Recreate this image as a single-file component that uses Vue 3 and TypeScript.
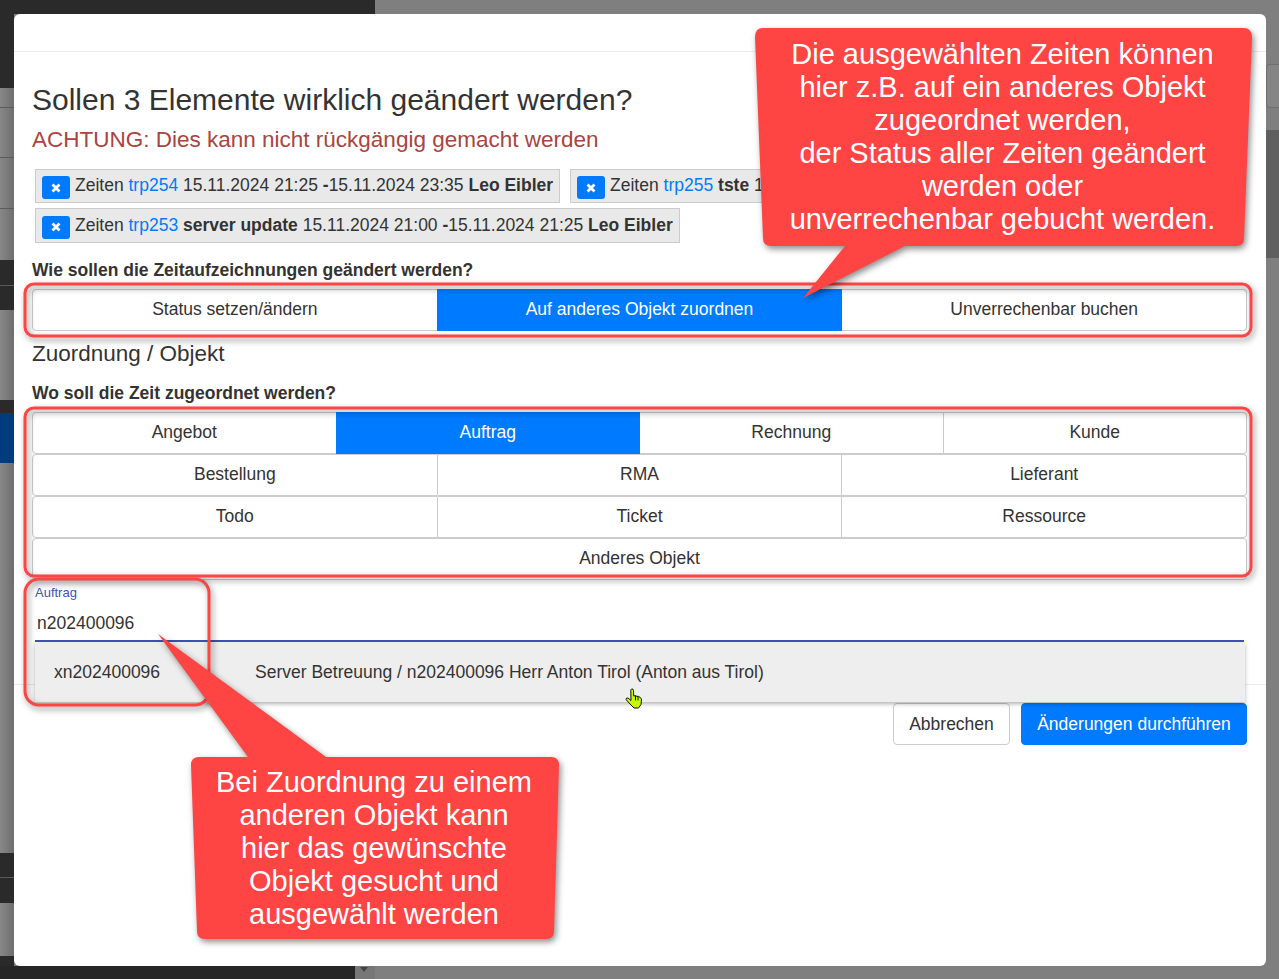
<script setup lang="ts">
interface Chip { id: string; label?: string; from: string; to: string }
const modes = ['Status setzen/ändern', 'Auf anderes Objekt zuordnen', 'Unverrechenbar buchen']
const rows: string[][] = [
  ['Angebot', 'Auftrag', 'Rechnung', 'Kunde'],
  ['Bestellung', 'RMA', 'Lieferant'],
  ['Todo', 'Ticket', 'Ressource'],
  ['Anderes Objekt'],
]
const chips: Chip[] = [
  { id: 'trp254', from: '15.11.2024 21:25', to: '15.11.2024 23:35' },
  { id: 'trp255', label: 'tste', from: '15.11.2024 21:25', to: '15.11.2024 23:35' },
  { id: 'trp253', label: 'server update', from: '15.11.2024 21:00', to: '15.11.2024 21:25' },
]
const rails = [
  ['d', 88], ['g', 19], ['l', 1], ['g', 49], ['l', 1], ['g', 50], ['l', 1], ['g', 51],
  ['d', 25], ['l', 1], ['d', 24], ['g', 90], ['d', 13], ['b', 50], ['g', 390],
  ['d', 24], ['l', 1], ['d', 25], ['g', 53], ['d', 23],
] as const
</script>

<template>
  <div class="stage">
    <div class="top-strip"></div>
    <div class="rail">
      <div v-for="(r, i) in rails" :key="i" :class="['rail-part', r[0]]" :style="{ height: r[1] + 'px' }"></div>
    </div>
    <div class="bottom-strip">
      <div class="bottom-dark"></div>
      <div class="bottom-arrow"></div>
    </div>
    <div class="scroll">
      <div class="scroll-btn"></div>
      <div class="scroll-arrow"></div>
      <div class="scroll-thumb"></div>
    </div>

    <section class="modal">
      <header class="modal-head"></header>
      <div class="modal-body">
        <h3 class="title">Sollen 3 Elemente wirklich geändert werden?</h3>
        <h4 class="warn">ACHTUNG: Dies kann nicht rückgängig gemacht werden</h4>
        <div class="chips">
          <div v-for="c in chips" :key="c.id" class="chip">
            <span class="chip-x">
              <svg width="10" height="10" viewBox="0 0 10 10"><path d="M1.5 1.5 L8.5 8.5 M8.5 1.5 L1.5 8.5" stroke="#fff" stroke-width="2.8" /></svg>
            </span>
            <span class="chip-text">Zeiten <a class="link">{{ c.id }}</a>{{ ' ' }}<template v-if="c.label"><b>{{ c.label }}</b>{{ ' ' }}</template>{{ c.from }} <b>-</b>{{ c.to }} <b>Leo Eibler</b></span>
          </div>
        </div>
        <p class="question q1">Wie sollen die Zeitaufzeichnungen geändert werden?</p>
        <div class="btn-row">
          <button v-for="m in modes" :key="m" :class="['opt', { on: m === modes[1] }]">{{ m }}</button>
        </div>
        <h5 class="sub">Zuordnung / Objekt</h5>
        <p class="question q2">Wo soll die Zeit zugeordnet werden?</p>
        <div class="btn-stack">
          <div v-for="(r, i) in rows" :key="i" class="btn-row">
            <button v-for="b in r" :key="b" :class="['opt', { on: b === 'Auftrag' }]">{{ b }}</button>
          </div>
        </div>
        <div class="field">
          <label class="field-label">Auftrag</label>
          <div class="field-value">n202400096</div>
          <div class="dropdown">
            <span class="dd-code">xn202400096</span>
            <span class="dd-text">Server Betreuung / n202400096 Herr Anton Tirol (Anton aus Tirol)</span>
          </div>
        </div>
      </div>
      <footer class="modal-foot">
        <button class="act cancel">Abbrechen</button>
        <button class="act go">Änderungen durchführen</button>
      </footer>
    </section>

    <svg class="marks" width="1279" height="979" viewBox="0 0 1279 979">
      <g class="shadowed" fill="none" stroke="#ff4444" stroke-width="3">
        <rect x="25" y="284" width="1226" height="52" rx="9" />
        <rect x="25" y="408" width="1226" height="168" rx="9" />
        <rect x="25" y="579" width="184" height="126" rx="14" />
      </g>
      <g class="shadowed" fill="#ff4444">
        <path d="M763 28 H1243 Q1252 28 1252 37 L1244 238 Q1244 246 1236 246 H905 L803 298 L845 246 H771 Q763 246 763 238 L755 37 Q755 28 763 28 Z" />
        <path d="M199 757 H248 L158 634 L326 757 H551 Q559 757 559 765 L554 931 Q554 939 546 939 H205 Q197 939 197 931 L191 765 Q191 757 199 757 Z" />
      </g>
    </svg>
    <div class="note note-a">
      Die ausgewählten Zeiten können<br>hier z.B. auf ein anderes Objekt<br>zugeordnet werden,<br>der Status aller Zeiten geändert<br>werden oder<br>unverrechenbar gebucht werden.
    </div>
    <div class="note note-b">
      Bei Zuordnung zu einem<br>anderen Objekt kann<br>hier das gewünschte<br>Objekt gesucht und<br>ausgewählt werden
    </div>
    <svg class="cursor" width="18" height="21" viewBox="0 0 18 21">
      <path d="M6.5 1 Q8.5 0.5 8.5 2.5 L8.7 8 L10.5 7.6 L12 8.4 L13.5 8.4 L15.5 9.6 Q16.5 10.5 16.5 12 L16 16.5 L13.5 20 H9 L5 16 L1 11.5 Q1 9.6 3 10 L6 12.5 L5.8 2.5 Q5.8 1.4 6.5 1 Z" fill="#c8f800" stroke="#111" stroke-width="1" />
      <path d="M10.5 8 V12.5 M13 8.5 V12.5" stroke="#111" stroke-width="1" fill="none" />
    </svg>
  </div>
</template>

<style scoped>
.stage {
  position: relative;
  width: 1279px;
  height: 979px;
  overflow: hidden;
  background: #7f7f7f;
  font-family: "Liberation Sans", Arial, sans-serif;
  color: #333;
}
.top-strip { position: absolute; left: 0; top: 0; width: 375px; height: 14px; background: #2a2a2a; }
.rail { position: absolute; left: 0; top: 0; width: 14px; }
.rail-part.d { background: #2a2a2a; }
.rail-part.g { background: linear-gradient(90deg, #888, #6e6e6e); }
.rail-part.l { background: #5a5a5a; }
.rail-part.b { background: #003b7f; }
.bottom-strip { position: absolute; left: 0; bottom: 0; width: 375px; height: 13px; display: flex; background: #777; }
.bottom-dark { width: 355px; background: #262626; }
.bottom-arrow {
  margin: 1px 0 0 5px;
  width: 0;
  height: 0;
  border-left: 4px solid transparent;
  border-right: 4px solid transparent;
  border-top: 5px solid #444;
}
.scroll { position: absolute; right: 0; top: 0; width: 13px; height: 979px; display: flex; flex-direction: column; }
.scroll-btn { margin-top: 64px; height: 42px; background: #858585; border: 1px solid #6e6e6e; border-right: 0; border-radius: 4px 0 0 4px; }
.scroll-arrow { height: 22px; background: #7f7f7f; }
.scroll-thumb { height: 128px; background: #5f5f5f; }

.modal {
  position: absolute;
  z-index: 0;
  left: 14px;
  top: 14px;
  width: 1252px;
  height: 952px;
  background: #fff;
  border-radius: 6px;
  display: flex;
  flex-direction: column;
}
.modal-head { height: 37px; border-bottom: 1px solid #e9ecef; flex: none; }
.modal-body { padding: 0 19px 0 18px; flex: none; }
.title { margin: 31px 0 0; height: 34px; line-height: 34px; font-size: 30px; font-weight: 400; white-space: nowrap; }
.warn { margin: 9px 0 0; height: 28px; line-height: 28px; font-size: 22.5px; font-weight: 400; color: #a94442; white-space: nowrap; }
.chips { margin-top: 15px; padding-left: 3px; display: flex; flex-wrap: wrap; column-gap: 10px; row-gap: 5px; }
.chip {
  height: 34px;
  box-sizing: border-box;
  display: flex;
  align-items: center;
  padding: 0 6px;
  gap: 5px;
  font-size: 17.5px;
  background: #e9e9e9;
  border: 1px solid #ccc;
  white-space: nowrap;
}
.chip:last-child { height: 35px; }
.chip-text { margin-top: -1px; }
.chip-x {
  width: 28px;
  height: 23px;
  background: #007bff;
  border-radius: 3px;
  display: flex;
  align-items: center;
  justify-content: center;
  margin-top: 3px;
}
.link { color: #007bff; }
.question { margin: 0; height: 22px; line-height: 22px; font-size: 17.5px; font-weight: 700; white-space: nowrap; }
.q1 { margin-top: 16px; }
.q2 { margin-top: 14px; }
.btn-row { display: flex; height: 42px; }
.q1 + .btn-row { margin-top: 8px; }
.opt {
  flex: 1 1 0;
  min-width: 0;
  background: #fff;
  border: 1px solid #ccc;
  border-left-width: 0;
  border-radius: 0;
  font: 17.5px "Liberation Sans", Arial, sans-serif;
  color: #333;
  padding: 0 0 2px;
}
.opt:first-child { border-left-width: 1px; border-radius: 4px 0 0 4px; }
.opt:last-child { border-radius: 0 4px 4px 0; }
.opt:only-child { border-radius: 4px; }
.opt.on { background: #007bff; border-color: #007bff; box-shadow: -1px 0 0 #007bff; color: #fff; border-radius: 0; }
.sub { margin: 9px 0 0; height: 28px; line-height: 28px; font-size: 22.5px; font-weight: 400; white-space: nowrap; }
.btn-stack { margin-top: 8px; display: flex; flex-direction: column; }
.field { position: relative; margin: 6px 0 0 3px; width: 1209px; height: 54px; border-bottom: 2px solid #3f51b5; }
.field-label { display: block; height: 14px; line-height: 14px; font-size: 13px; color: #3f51b5; }
.field-value { margin: 12px 0 0 2px; height: 22px; line-height: 22px; font-size: 17.5px; }
.dropdown {
  position: absolute;
  left: 0;
  top: 100%;
  margin-top: 2px;
  width: 1210px;
  height: 60px;
  background: #eee;
  box-shadow: 0 2px 4px rgba(0, 0, 0, .3);
  display: flex;
  align-items: center;
  font-size: 17.5px;
  z-index: 2;
  white-space: nowrap;
}
.dd-code { width: 220px; padding-left: 19px; box-sizing: border-box; }
.modal-foot {
  margin-top: 42px;
  border-top: 1px solid #e9ecef;
  padding: 18px 19px 0;
  display: flex;
  justify-content: flex-end;
  gap: 11px;
}
.act { height: 42px; border-radius: 4px; font: 17.5px "Liberation Sans", Arial, sans-serif; padding: 0; }
.cancel { width: 117px; background: #fff; border: 1px solid #ccc; color: #333; }
.go { width: 226px; background: #007bff; border: 1px solid #007bff; color: #fff; }

.marks { position: absolute; left: 0; top: 0; pointer-events: none; }
.shadowed { filter: drop-shadow(2px 3px 3px rgba(0, 0, 0, .45)); }
.note { position: absolute; color: #fff; text-align: center; font-size: 29px; line-height: 33px; white-space: nowrap; }
.note-a { left: 754px; top: 38px; width: 497px; }
.note-b { left: 191px; top: 766px; width: 366px; }
.cursor { position: absolute; left: 625px; top: 688px; }
</style>

<style>
html, body { margin: 0; padding: 0; overflow: hidden; }
</style>
